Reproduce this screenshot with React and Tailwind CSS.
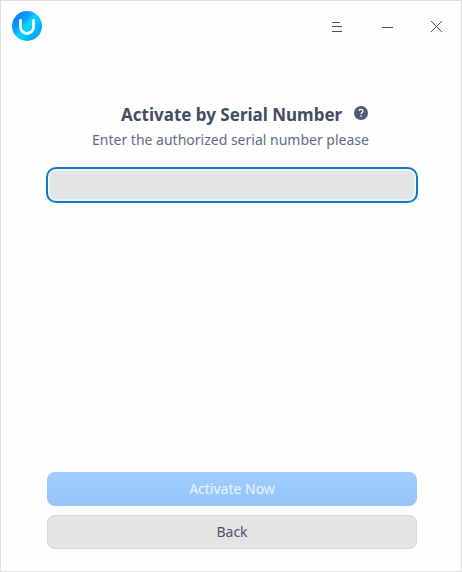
function Logo() {
  return (
    <svg className="size-[30px]" viewBox="0 0 30 30" fill="none" aria-hidden="true">
      <defs>
        <linearGradient id="logo" x1="3" y1="5" x2="27" y2="25" gradientUnits="userSpaceOnUse">
          <stop offset="0" stopColor="#0880ff" />
          <stop offset="0.3" stopColor="#0ba0ff" />
          <stop offset="0.5" stopColor="#06d8ff" />
          <stop offset="0.7" stopColor="#05c0fc" />
          <stop offset="1" stopColor="#05a0f5" />
        </linearGradient>
      </defs>
      <circle cx="15" cy="15" r="15" fill="url(#logo)" />
      <path d="M8.5 9.5V16A6.5 6.5 0 0 0 21.5 16V9.5" stroke="white" strokeWidth="2.8" strokeLinecap="round" />
    </svg>
  );
}

function TitleBar() {
  return (
    <header className="flex h-[50px] items-center justify-between pr-[18px] pl-[11px] text-[#4a4e5a]">
      <Logo />
      <div className="flex items-center gap-[38px] pt-0.5">
        <button aria-label="Menu" className="size-3">
          <svg className="size-3" viewBox="0 0 12 12" stroke="currentColor" shapeRendering="crispEdges">
            <path d="M1 1.5H9M1 5.5H11M1 10.5H11" />
          </svg>
        </button>
        <button aria-label="Minimize" className="size-3">
          <svg className="size-3" viewBox="0 0 12 12" stroke="currentColor" shapeRendering="crispEdges">
            <path d="M1 6.5H12" />
          </svg>
        </button>
        <button aria-label="Close" className="size-3">
          <svg className="size-3" viewBox="0 0 12 12" stroke="currentColor">
            <path d="M0 0L11 11M11 0L0 11" />
          </svg>
        </button>
      </div>
    </header>
  );
}

export default function App() {
  return (
    <main className="flex h-[572px] w-[462px] flex-col border border-[#dedede] bg-[#fefefe] font-['Noto_Sans',sans-serif] text-sm">
      <TitleBar />
      <section className="flex flex-1 flex-col pt-[51px] pr-[43px] pb-[22px] pl-[45px]">
        <div className="flex h-6 items-center pl-[75px]">
          <h1 className="w-[222px] pt-0.5 text-[17px] leading-6 font-bold whitespace-nowrap text-[#434c63]">Activate by Serial Number</h1>
          <svg className="mb-0.5 ml-[11px] size-[14px]" viewBox="0 0 14 14" fill="none" aria-label="Help">
            <circle cx="7" cy="7" r="7" fill="#4f5b73" />
            <path d="M5.2 5.1C5.2 4 6 3.4 7.1 3.4C8.2 3.4 9 4 9 5C9 6.4 7.1 6.4 7.1 8.1" stroke="white" strokeWidth="1.3" />
            <rect x="6.4" y="9.2" width="1.4" height="1.4" fill="white" />
          </svg>
        </div>
        <p className="mt-1 h-5 pr-[3px] text-center leading-5 text-[#5d6d84]">Enter the authorized serial number please</p>
        <input
          aria-label="Serial number"
          className="mt-[17px] h-9 w-[372px] rounded-[10px] border-2 border-[#1677ca] bg-[#e4e4e4] px-3 shadow-[inset_0_0_0_2px_#e5f7ff] outline-none"
        />
        <div className="mt-auto flex flex-col gap-[9px] px-px">
          <button className="h-[34px] rounded-lg bg-linear-to-b from-[#9fceff] to-[#94c5f8] text-[#e8f5ff]">Activate Now</button>
          <button className="h-[34px] rounded-lg border border-[#d9d9d9] bg-[#e4e4e4] text-[#4b536b]">Back</button>
        </div>
      </section>
    </main>
  );
}
